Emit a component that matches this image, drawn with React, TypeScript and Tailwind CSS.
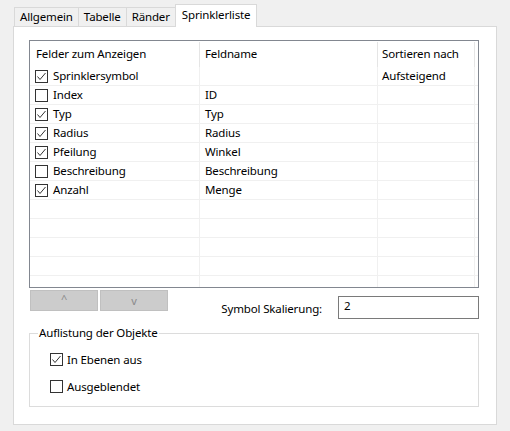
import React from 'react';

type Zeile = { feld: string; name: string; sort: string; an: boolean };

const ZEILEN: Zeile[] = [
  { feld: 'Sprinklersymbol', name: '', sort: 'Aufsteigend', an: true },
  { feld: 'Index', name: 'ID', sort: '', an: false },
  { feld: 'Typ', name: 'Typ', sort: '', an: true },
  { feld: 'Radius', name: 'Radius', sort: '', an: true },
  { feld: 'Pfeilung', name: 'Winkel', sort: '', an: true },
  { feld: 'Beschreibung', name: 'Beschreibung', sort: '', an: false },
  { feld: 'Anzahl', name: 'Menge', sort: '', an: true },
];

const TABS = ['Allgemein', 'Tabelle', 'Ränder', 'Sprinklerliste'];

function Kaestchen({ an }: { an: boolean }) {
  return (
    <span className="w-[13px] h-[13px] border border-[#333333] bg-white flex items-center justify-center shrink-0">
      {an && (
        <svg width="11" height="11" viewBox="0 0 11 11">
          <polyline points="1.5,5.5 4,8.5 9.5,2" fill="none" stroke="#333333" strokeWidth="1" />
        </svg>
      )}
    </span>
  );
}

export default function App() {
  const leer = Array.from({ length: 5 });
  return (
    <div className="w-[510px] h-[431px] bg-[#f0f0f0] text-[11.5px] tracking-[-0.15px] text-black font-['Segoe_UI','Noto_Sans',sans-serif] leading-[16px]">
      {/* Reiter */}
      <div className="flex items-end h-[26px] pl-[14px] relative z-10">
        {TABS.map((t, i) => {
          const aktiv = i === TABS.length - 1;
          return aktiv ? (
            <div
              key={t}
              className="h-[23px] -mb-px -ml-px px-[6px] pb-[3px] flex items-center bg-white border border-b-0 border-[#d9d9d9]"
            >
              {t}
            </div>
          ) : (
            <div
              key={t}
              className={`h-[19px] px-[5px] flex items-center bg-[#f0f0f0] border border-b-0 border-[#d9d9d9] ${i > 0 ? '-ml-px' : ''}`}
            >
              {t}
            </div>
          );
        })}
      </div>

      {/* Inhalt */}
      <div className="ml-[13px] w-[484px] h-[399px] bg-white border border-[#d9d9d9] pl-[15px] pt-[13px]">
        <div className="w-[450px] h-[248px] border border-[#828790] overflow-hidden">
          <div className="flex h-[26px] items-center">
            <div className="w-[170px] h-full flex items-center pl-[6px] border-r border-[#e5e5e5] mt-[2px]">
              <span className="-mt-[2px]">Felder zum Anzeigen</span>
            </div>
            <div className="w-[178px] h-full flex items-center pl-[5px] border-r border-[#e5e5e5] mt-[2px]">
              <span className="-mt-[2px]">Feldname</span>
            </div>
            <div className="w-[97px] h-full flex items-center pl-[4px] border-r border-[#e5e5e5] mt-[2px]">
              <span className="-mt-[2px]">Sortieren nach</span>
            </div>
          </div>
          {ZEILEN.map((z) => (
            <div key={z.feld} className="flex h-[19px] border-b border-[#f0f0f0]">
              <div className="w-[170px] flex items-center gap-[5px] pl-[5px] border-r border-[#f0f0f0]">
                <Kaestchen an={z.an} />
                <span>{z.feld}</span>
              </div>
              <div className="w-[178px] flex items-center pl-[5px] border-r border-[#f0f0f0]">{z.name}</div>
              <div className="w-[97px] flex items-center pl-[4px] border-r border-[#f0f0f0]">{z.sort}</div>
            </div>
          ))}
          {leer.map((_, i) => (
            <div key={i} className="flex h-[19px] border-b border-[#f0f0f0]">
              <div className="w-[170px] border-r border-[#f0f0f0]" />
              <div className="w-[178px] border-r border-[#f0f0f0]" />
              <div className="w-[97px] border-r border-[#f0f0f0]" />
            </div>
          ))}
          <div className="flex h-[19px]">
            <div className="w-[170px] border-r border-[#f0f0f0]" />
            <div className="w-[178px] border-r border-[#f0f0f0]" />
            <div className="w-[97px] border-r border-[#f0f0f0]" />
          </div>
        </div>

        {/* Knöpfe + Skalierung */}
        <div className="flex items-start mt-[2px] w-[450px]">
          <div className="flex gap-[2px] ml-[1px]">
            <button className="w-[68px] h-[21px] bg-[#cccccc] border border-[#c0c0c0] text-[#8a8a8a] text-[11px] leading-none pb-[4px]">
              ^
            </button>
            <button className="w-[68px] h-[21px] bg-[#cccccc] border border-[#c0c0c0] text-[#8a8a8a] text-[11px] leading-none">
              v
            </button>
          </div>
          <div className="ml-auto mt-[6px] flex items-center">
            <span className="mr-[16px] mt-[2px]">Symbol Skalierung:</span>
            <div className="w-[141px] h-[23px] border border-[#7a7a7a] pl-[5px] flex items-center pb-[3px]">2</div>
          </div>
        </div>

        {/* Gruppe */}
        <fieldset className="mt-[6px] w-[450px] h-[82px] border border-[#dcdcdc] pl-[8px] pt-[12px]">
          <legend className="px-[1px] leading-[16px]">Auflistung der Objekte</legend>
          <div className="flex flex-col gap-[14px] pl-[12px]">
            <label className="flex items-center gap-[4px] h-[13px]">
              <Kaestchen an={true} />
              <span>In Ebenen aus</span>
            </label>
            <label className="flex items-center gap-[4px] h-[13px]">
              <Kaestchen an={false} />
              <span>Ausgeblendet</span>
            </label>
          </div>
        </fieldset>
      </div>
    </div>
  );
}
